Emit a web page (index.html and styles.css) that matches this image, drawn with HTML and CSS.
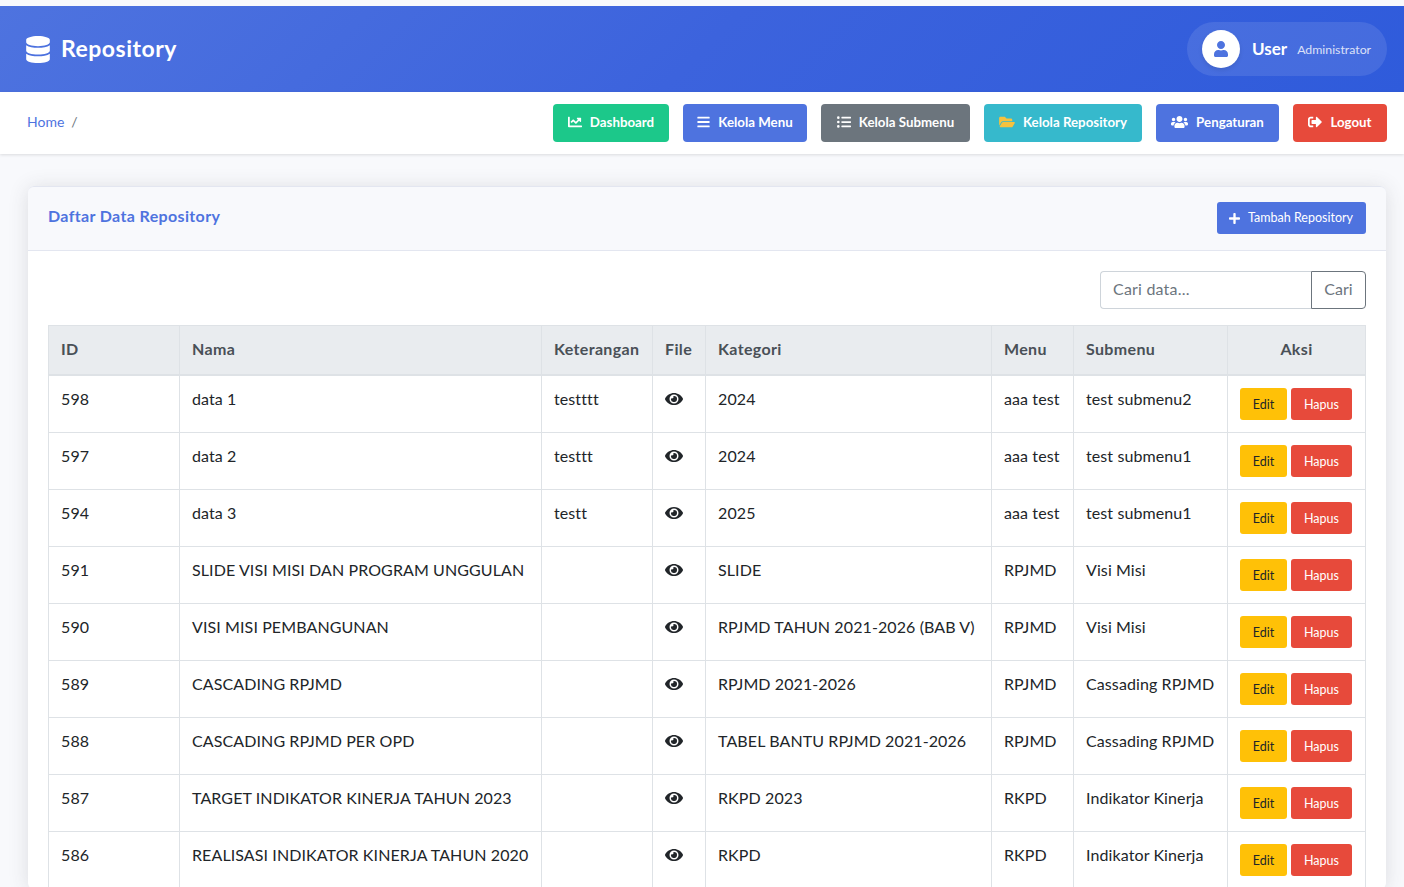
FILE: index.html
```html
<!DOCTYPE html>
<html lang="id">
<head>
<meta charset="utf-8">
<title>Repository</title>
<link rel="stylesheet" href="styles.css">
</head>
<body>
<svg class="defs" width="0" height="0" aria-hidden="true">
  <symbol id="eye" viewBox="0 0 576 512"><path fill="currentColor" d="M572.52 241.4C518.29 135.59 410.93 64 288 64S57.68 135.64 3.48 241.41a32.35 32.35 0 0 0 0 29.19C57.71 376.41 165.07 448 288 448s230.32-71.64 284.52-177.41a32.35 32.35 0 0 0 0-29.19zM288 400a144 144 0 1 1 144-144 143.93 143.93 0 0 1-144 144zm0-240a95.31 95.31 0 0 0-25.31 3.79 47.85 47.85 0 0 1-66.9 66.9A95.78 95.78 0 1 0 288 160z"/></symbol>
</svg>
<header class="topbar">
  <div class="brand">
    <svg class="brand-icon" viewBox="0 0 448 512"><path fill="currentColor" d="M448 73.14v45.72C448 159.14 347.67 192 224 192S0 159.14 0 118.86V73.14C0 32.86 100.33 0 224 0s224 32.86 224 73.14zM448 176v102.86C448 319.14 347.67 352 224 352S0 319.14 0 278.86V176c48.13 33.14 136.21 48.57 224 48.57S399.87 209.14 448 176zm0 160v102.86C448 479.14 347.67 512 224 512S0 479.14 0 438.86V336c48.13 33.14 136.21 48.57 224 48.57S399.87 369.14 448 336z"/></svg>
    <span>Repository</span>
  </div>
  <div class="user-pill">
    <span class="avatar"><svg viewBox="0 0 448 512"><path fill="currentColor" d="M224 256c70.7 0 128-57.3 128-128S294.7 0 224 0 96 57.3 96 128s57.3 128 128 128zm89.6 32h-16.7c-22.2 10.2-46.9 16-72.9 16s-50.6-5.8-72.9-16h-16.7C60.2 288 0 348.2 0 422.4V464c0 26.5 21.5 48 48 48h352c26.5 0 48-21.5 48-48v-41.6c0-74.2-60.2-134.4-134.4-134.4z"/></svg></span>
    <span class="user-name">User</span>
    <span class="user-role">Administrator</span>
  </div>
</header>
<nav class="subbar">
  <div class="crumbs"><a href="#">Home</a><span class="crumb-sep">/</span></div>
  <div class="actions">
    <a class="btn green w-dash" href="#"><svg class="ico" viewBox="0 0 512 512"><path fill="currentColor" d="M496 384H64V80c0-8.84-7.16-16-16-16H16C7.16 64 0 71.16 0 80v336c0 17.67 14.33 32 32 32h464c8.84 0 16-7.16 16-16v-32c0-8.84-7.16-16-16-16zM464 96H345.94c-21.38 0-32.09 25.85-16.97 40.97l32.4 32.4L288 242.75l-73.37-73.37c-12.5-12.5-32.76-12.5-45.25 0l-68.69 68.69c-6.25 6.25-6.25 16.38 0 22.63l22.62 22.62c6.25 6.25 16.38 6.25 22.63 0L192 237.25l73.37 73.37c12.5 12.5 32.76 12.5 45.25 0l96-96 32.4 32.4c15.12 15.12 40.97 4.41 40.97-16.97V112c.01-8.84-7.15-16-16-16z"/></svg>Dashboard</a>
    <a class="btn blue w-menu" href="#"><svg class="ico narrow" viewBox="0 0 448 512"><path fill="currentColor" d="M16 132h416c8.84 0 16-7.16 16-16V76c0-8.84-7.16-16-16-16H16C7.16 60 0 67.16 0 76v40c0 8.84 7.16 16 16 16zm0 160h416c8.84 0 16-7.16 16-16v-40c0-8.84-7.16-16-16-16H16c-8.84 0-16 7.16-16 16v40c0 8.84 7.16 16 16 16zm0 160h416c8.84 0 16-7.16 16-16v-40c0-8.84-7.16-16-16-16H16c-8.84 0-16 7.16-16 16v40c0 8.84 7.16 16 16 16z"/></svg>Kelola Menu</a>
    <a class="btn gray w-sub" href="#"><svg class="ico" viewBox="0 0 512 512"><path fill="currentColor" d="M48 48a48 48 0 1 0 48 48 48 48 0 0 0-48-48zm0 160a48 48 0 1 0 48 48 48 48 0 0 0-48-48zm0 160a48 48 0 1 0 48 48 48 48 0 0 0-48-48zm448 16H176a16 16 0 0 0-16 16v32a16 16 0 0 0 16 16h320a16 16 0 0 0 16-16v-32a16 16 0 0 0-16-16zm0-320H176a16 16 0 0 0-16 16v32a16 16 0 0 0 16 16h320a16 16 0 0 0 16-16V80a16 16 0 0 0-16-16zm0 160H176a16 16 0 0 0-16 16v32a16 16 0 0 0 16 16h320a16 16 0 0 0 16-16v-32a16 16 0 0 0-16-16z"/></svg>Kelola Submenu</a>
    <a class="btn cyan w-repo" href="#"><svg class="ico folder" viewBox="0 0 576 512"><path fill="currentColor" d="M572.694 292.093L500.27 416.248A63.997 63.997 0 0 1 444.989 448H45.025c-18.523 0-30.064-20.093-20.731-36.093l72.424-124.155A64 64 0 0 1 152 256h399.964c18.523 0 30.064 20.093 20.73 36.093zM152 224h328v-48c0-26.51-21.49-48-48-48H272l-64-64H48C21.49 64 0 85.49 0 112v278.046l69.077-118.418C86.214 242.25 117.989 224 152 224z"/></svg>Kelola Repository</a>
    <a class="btn blue w-set" href="#"><svg class="ico wide" viewBox="0 0 640 512"><path fill="currentColor" d="M96 224c35.3 0 64-28.7 64-64s-28.7-64-64-64-64 28.7-64 64 28.7 64 64 64zm448 0c35.3 0 64-28.7 64-64s-28.7-64-64-64-64 28.7-64 64 28.7 64 64 64zm32 32h-64c-17.6 0-33.5 7.1-45.1 18.6 40.3 22.1 68.9 62 75.1 109.4h66c17.7 0 32-14.3 32-32v-32c0-35.3-28.7-64-64-64zm-256 0c61.9 0 112-50.1 112-112S381.9 32 320 32 208 82.1 208 144s50.1 112 112 112zm76.8 32h-8.3c-20.8 10-43.9 16-68.5 16s-47.6-6-68.5-16h-8.3C179.6 288 128 339.6 128 403.2V432c0 26.5 21.5 48 48 48h288c26.5 0 48-21.5 48-48v-28.8c0-63.6-51.6-115.2-115.2-115.2zm-223.7-13.4C161.5 263.1 145.6 256 128 256H64c-35.3 0-64 28.7-64 64v32c0 17.7 14.3 32 32 32h65.9c6.3-47.4 34.9-87.3 75.2-109.4z"/></svg>Pengaturan</a>
    <a class="btn red w-out" href="#"><svg class="ico" viewBox="0 0 512 512"><path fill="currentColor" d="M497 273L329 441c-15 15-41 4.500-41-17v-96H152c-13.300 0-24-10.700-24-24v-96c0-13.300 10.700-24 24-24h136V88c0-21.400 25.900-32 41-17l168 168c9.300 9.400 9.300 24.600 0 34zM192 436v-40c0-6.600-5.400-12-12-12H96c-17.700 0-32-14.300-32-32V160c0-17.700 14.300-32 32-32h84c6.600 0 12-5.400 12-12V76c0-6.600-5.400-12-12-12H96c-53 0-96 43-96 96v192c0 53 43 96 96 96h84c6.600 0 12-5.400 12-12z"/></svg>Logout</a>
  </div>
</nav>
<main class="content">
  <section class="card">
    <div class="card-head">
      <h2>Daftar Data Repository</h2>
      <a class="btn-add" href="#"><svg class="plus" viewBox="0 0 448 512"><path fill="currentColor" d="M416 208H272V64c0-17.670-14.330-32-32-32h-32c-17.670 0-32 14.330-32 32v144H32c-17.670 0-32 14.330-32 32v32c0 17.670 14.330 32 32 32h144v144c0 17.670 14.330 32 32 32h32c17.670 0 32-14.330 32-32V304h144c17.670 0 32-14.330 32-32v-32c0-17.670-14.330-32-32-32z"/></svg>Tambah Repository</a>
    </div>
    <div class="card-body">
      <form class="search">
        <input class="search-input" type="text" placeholder="Cari data...">
        <button class="search-btn" type="button">Cari</button>
      </form>
      <table class="grid">
        <colgroup><col class="c-id"><col class="c-nama"><col class="c-ket"><col class="c-file"><col class="c-kat"><col class="c-menu"><col class="c-sub"><col class="c-aksi"></colgroup>
        <thead><tr><th>ID</th><th>Nama</th><th>Keterangan</th><th>File</th><th>Kategori</th><th>Menu</th><th>Submenu</th><th class="center">Aksi</th></tr></thead>
        <tbody>
          <tr><td>598</td><td>data 1</td><td>testttt</td><td><svg class="eye"><use href="#eye"/></svg></td><td>2024</td><td>aaa test</td><td>test submenu2</td><td class="aksi"><a class="edit" href="#">Edit</a><a class="hapus" href="#">Hapus</a></td></tr>
          <tr><td>597</td><td>data 2</td><td>testtt</td><td><svg class="eye"><use href="#eye"/></svg></td><td>2024</td><td>aaa test</td><td>test submenu1</td><td class="aksi"><a class="edit" href="#">Edit</a><a class="hapus" href="#">Hapus</a></td></tr>
          <tr><td>594</td><td>data 3</td><td>testt</td><td><svg class="eye"><use href="#eye"/></svg></td><td>2025</td><td>aaa test</td><td>test submenu1</td><td class="aksi"><a class="edit" href="#">Edit</a><a class="hapus" href="#">Hapus</a></td></tr>
          <tr><td>591</td><td>SLIDE VISI MISI DAN PROGRAM UNGGULAN</td><td></td><td><svg class="eye"><use href="#eye"/></svg></td><td>SLIDE</td><td>RPJMD</td><td>Visi Misi</td><td class="aksi"><a class="edit" href="#">Edit</a><a class="hapus" href="#">Hapus</a></td></tr>
          <tr><td>590</td><td>VISI MISI PEMBANGUNAN</td><td></td><td><svg class="eye"><use href="#eye"/></svg></td><td>RPJMD TAHUN 2021-2026 (BAB V)</td><td>RPJMD</td><td>Visi Misi</td><td class="aksi"><a class="edit" href="#">Edit</a><a class="hapus" href="#">Hapus</a></td></tr>
          <tr><td>589</td><td>CASCADING RPJMD</td><td></td><td><svg class="eye"><use href="#eye"/></svg></td><td>RPJMD 2021-2026</td><td>RPJMD</td><td>Cassading RPJMD</td><td class="aksi"><a class="edit" href="#">Edit</a><a class="hapus" href="#">Hapus</a></td></tr>
          <tr><td>588</td><td>CASCADING RPJMD PER OPD</td><td></td><td><svg class="eye"><use href="#eye"/></svg></td><td>TABEL BANTU RPJMD 2021-2026</td><td>RPJMD</td><td>Cassading RPJMD</td><td class="aksi"><a class="edit" href="#">Edit</a><a class="hapus" href="#">Hapus</a></td></tr>
          <tr><td>587</td><td>TARGET INDIKATOR KINERJA TAHUN 2023</td><td></td><td><svg class="eye"><use href="#eye"/></svg></td><td>RKPD 2023</td><td>RKPD</td><td>Indikator Kinerja</td><td class="aksi"><a class="edit" href="#">Edit</a><a class="hapus" href="#">Hapus</a></td></tr>
          <tr><td>586</td><td>REALISASI INDIKATOR KINERJA TAHUN 2020</td><td></td><td><svg class="eye"><use href="#eye"/></svg></td><td>RKPD</td><td>RKPD</td><td>Indikator Kinerja</td><td class="aksi"><a class="edit" href="#">Edit</a><a class="hapus" href="#">Hapus</a></td></tr>
        </tbody>
      </table>
    </div>
  </section>
</main>
</body>
</html>
```
FILE: styles.css
```css
* { box-sizing: border-box; }
html, body { height: 887px; overflow: hidden; }
body {
  margin: 0;
  padding-top: 6px;
  background: #f8f9fc;
  color: #212529;
  font-family: Lato, "Noto Sans", sans-serif;
  font-size: 16px;
  line-height: 24px;
}
a { text-decoration: none; }
.defs { position: absolute; }
.topbar {
  height: 86px;
  padding: 16px 17px 16px 26px;
  display: flex;
  align-items: center;
  justify-content: space-between;
  color: #fff;
  background: linear-gradient(135deg, #4e73df 0%, #3c63dd 50%, #2f5bdb 100%);
}
.brand { display: flex; align-items: center; gap: 11px; font-size: 23px; font-weight: 700; letter-spacing: .5px; }
.brand span { padding-bottom: 2px; }
.brand-icon { width: 24px; height: 27px; display: block; }
.user-pill {
  height: 54px;
  width: 200px;
  padding: 0 15px;
  display: flex;
  align-items: center;
  border-radius: 27px;
  background: rgba(255, 255, 255, .1);
}
.avatar {
  width: 38px;
  height: 38px;
  margin-right: 12px;
  flex: none;
  display: flex;
  align-items: center;
  justify-content: center;
  border-radius: 50%;
  color: #4e73df;
  background: #fff;
  box-shadow: 0 2px 4px rgba(0, 0, 0, .1);
}
.avatar svg { width: 14px; height: 16px; }
.user-name { font-size: 17px; font-weight: 700; margin-right: 10px; padding-bottom: 1px; }
.user-role { font-size: 12.3px; opacity: .8; padding-top: 1px; }
.subbar {
  height: 62px;
  padding: 0 17px 0 27px;
  display: flex;
  align-items: center;
  justify-content: space-between;
  background: #fff;
  box-shadow: 0 1px 3px rgba(0, 0, 0, .12);
}
.crumbs { font-size: 14px; color: #6c757d; padding-bottom: 2px; }
.crumbs a { color: #4e73df; }
.crumb-sep { margin-left: 7px; }
.actions { display: flex; gap: 14px; }
.btn {
  height: 38px;
  padding: 0 0 3px;
  display: flex;
  align-items: center;
  justify-content: center;
  border-radius: 4px;
  color: #fff;
  font-size: 13.3px;
  font-weight: 700;
}
.w-dash { width: 116px; }
.w-menu { width: 124px; }
.w-sub { width: 149px; }
.w-repo { width: 158px; }
.w-set { width: 123px; }
.w-out { width: 94px; }
.ico { width: 14px; height: 14px; margin-right: 8px; flex: none; }
.ico.narrow { width: 13px; }
.ico.wide { width: 17px; }
.ico.folder { width: 16px; color: #f6c23e; }
.green { background: #1cc88a; }
.blue { background: #4e73df; }
.gray { background: #6c757d; }
.cyan { background: #36b9cc; }
.red { background: #e74a3b; }
.content { padding: 32px 18px 0 28px; }
.card {
  background: #fff;
  border-radius: 6px;
  box-shadow: 0 2px 20px rgba(58, 59, 69, .15);
}
.card-head {
  height: 65px;
  padding: 15px 20px 16px 20px;
  display: flex;
  align-items: center;
  justify-content: space-between;
  background: #f8f9fc;
  border-top: 1px solid #e3e6f0;
  border-bottom: 1px solid #e3e6f0;
  border-radius: 6px 6px 0 0;
}
.card-head h2 { margin: 0 0 4px; color: #4e73df; font-size: 16px; font-weight: 700; letter-spacing: .36px; }
.btn-add {
  height: 32px;
  padding: 0 13px 0 12px;
  display: flex;
  align-items: center;
  border-radius: 3px;
  background: #4e73df;
  color: #fff;
  font-size: 12.5px;
}
.plus { width: 11px; height: 13px; margin-right: 8px; }
.card-body { padding: 20px 20px 0; }
.search { display: flex; justify-content: flex-end; margin-bottom: 16px; }
.search-input {
  width: 211px;
  height: 38px;
  padding: 0 12px 3px;
  border: 1px solid #ced4da;
  border-radius: 4px 0 0 4px;
  border-right: 0;
  font: 16px/24px Lato, sans-serif;
  letter-spacing: .2px;
  color: #6c757d;
}
.search-input::placeholder { color: #6c757d; }
.search-btn {
  width: 55px;
  height: 38px;
  padding: 0 0 2px;
  border: 1px solid #6c757d;
  border-radius: 0 4px 4px 0;
  background: #fff;
  color: #6c757d;
  font: 16px/24px Lato, sans-serif;
}
.grid { width: 1317px; table-layout: fixed; border-collapse: collapse; border: 1px solid #dee2e6; }
.c-id { width: 131px; }
.c-nama { width: 362px; }
.c-ket { width: 111px; }
.c-file { width: 53px; }
.c-kat { width: 286px; }
.c-menu { width: 82px; }
.c-sub { width: 154px; }
.c-aksi { width: 138px; }
th, td { border: 1px solid #dee2e6; padding: 12px; text-align: left; vertical-align: top; white-space: nowrap; }
th {
  height: 49px;
  padding-top: 11px;
  vertical-align: middle;
  background: #e9ecef;
  color: #495057;
  font-weight: 700;
  letter-spacing: .35px;
  border-bottom-width: 2px;
}
td { height: 57px; padding-top: 11px; letter-spacing: .1px; }
tbody tr:first-child td { height: 58px; }
th.center { text-align: center; }
.eye { width: 18px; height: 16px; display: block; margin-top: 4px; color: #212529; }
.aksi { padding-top: 12px; padding-bottom: 0; }
.edit, .hapus {
  display: inline-block;
  height: 32px;
  border-radius: 3px;
  font-size: 12.5px;
  line-height: 33px;
  letter-spacing: 0;
  text-align: center;
}
.edit { width: 47px; margin-right: 4px; background: #ffc107; color: #212529; }
.hapus { width: 61px; background: #e74a3b; color: #fff; }
```
